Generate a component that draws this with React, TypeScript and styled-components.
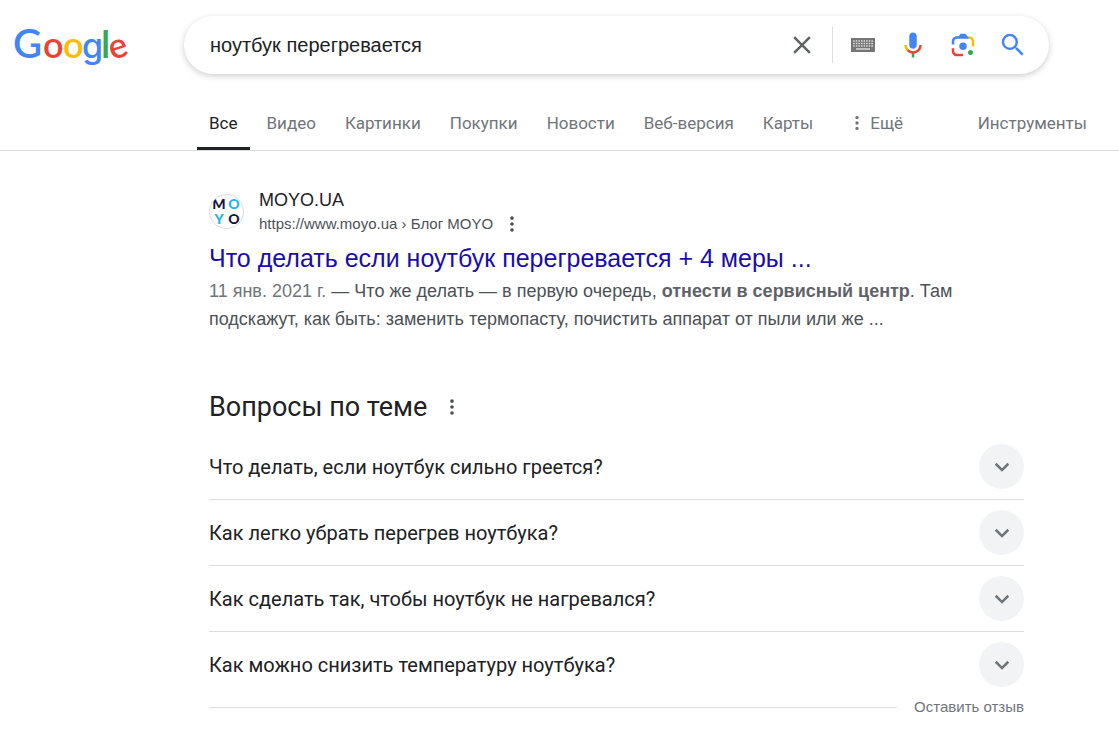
import React from 'react';
import styled, { createGlobalStyle } from 'styled-components';

const GlobalStyle = createGlobalStyle`
  *, *::before, *::after { box-sizing: border-box; }
  body {
    margin: 0;
    background: #fff;
    color: #202124;
    font-family: "Liberation Sans", Arial, sans-serif;
  }
  h2, h3, p, ul { margin: 0; padding: 0; font-weight: 400; }
  ul { list-style: none; }
  a { text-decoration: none; color: inherit; }
  button {
    border: 0;
    padding: 0;
    background: none;
    font: inherit;
    color: inherit;
    cursor: pointer;
  }
  svg { display: block; }
`;

const display = 'Roboto, "Liberation Sans", sans-serif';

const Header = styled.header`
  display: flex;
  align-items: center;
  padding: 16px 70px 0 12px;
`;

const LogoLink = styled.a`
  flex: 0 0 172px;
`;

const SearchForm = styled.form`
  flex: 1;
  display: flex;
  align-items: center;
  height: 58px;
  padding: 0 20px 0 26px;
  border-radius: 29px;
  background: #fff;
  box-shadow: 0 2px 6px rgba(32, 33, 36, 0.22);
`;

const SearchInput = styled.input`
  flex: 1;
  min-width: 0;
  border: 0;
  padding: 0;
  outline: 0;
  background: transparent;
  font: 20px/30px "Liberation Sans", Arial, sans-serif;
  color: #202124;
`;

const Divider = styled.span`
  width: 1px;
  height: 36px;
  margin: 0 14px;
  background: #dadce0;
`;

const IconButton = styled.button`
  display: grid;
  place-items: center;
  width: 32px;
  height: 32px;
`;

const SearchTools = styled.div`
  display: flex;
  gap: 18px;
`;

const TabBar = styled.nav`
  display: flex;
  height: 77px;
  padding: 22px 32px 0 197px;
  border-bottom: 1px solid #dadce0;
  font: 17px/24px ${display};
  color: #70757a;
`;

const Tabs = styled.ul`
  flex: 1;
  display: flex;
  gap: 5px;
`;

const Tab = styled.a<{ $active?: boolean }>`
  display: block;
  height: 54px;
  padding: 15px 12px 0;
  white-space: nowrap;
  color: ${p => (p.$active ? '#202124' : 'inherit')};
  border-bottom: 3px solid ${p => (p.$active ? '#202124' : 'transparent')};
`;

const TextButton = styled.button`
  display: flex;
  align-items: center;
  gap: 3px;
  height: 54px;
  padding: 0 12px 0 17px;
  white-space: nowrap;
`;

const ToolsButton = styled(TextButton)`
  padding: 0;
`;

const Main = styled.main`
  max-width: 1024px;
  padding: 36px 0 20px 209px;
`;

const Source = styled.div`
  display: flex;
  align-items: center;
  gap: 15px;
`;

const Favicon = styled.svg`
  flex: none;
  border: 1px solid #dadce0;
  border-radius: 50%;
`;

const SiteName = styled.div`
  font-size: 18px;
  line-height: 26px;
`;

const SiteUrl = styled.div`
  display: flex;
  align-items: center;
  gap: 8px;
  font-size: 15px;
  line-height: 22px;
  color: #4d5156;
`;

const MoreButton = styled.button`
  display: grid;
  place-items: center;
  width: 22px;
  height: 22px;
  color: #4d5156;
`;

const ResultTitle = styled.h3`
  padding: 6px 0 2px;
  font-size: 25px;
  line-height: 34px;
  color: #1a0dab;
`;

const Snippet = styled.p`
  font-size: 18px;
  line-height: 28px;
  color: #4d5156;

  time { color: #70757a; }
  b { color: #5f6368; }
`;

const Related = styled.section`
  padding-top: 56px;
`;

const RelatedHead = styled.div`
  display: flex;
  align-items: center;
  gap: 14px;
  height: 36px;
`;

const RelatedTitle = styled.h2`
  font: 27px/36px ${display};
`;

const Questions = styled.ul`
  padding-top: 9px;
`;

const Question = styled.li`
  border-bottom: 1px solid #dadce0;

  &:last-child { border-bottom: 0; }
`;

const QuestionButton = styled.button`
  display: flex;
  align-items: center;
  justify-content: space-between;
  width: 100%;
  height: 65px;
  text-align: left;
  font: 20px/28px ${display};
`;

const Chevron = styled.span`
  display: grid;
  place-items: center;
  width: 45px;
  height: 45px;
  border-radius: 50%;
  background: #f1f3f4;
  color: #70757a;
`;

const Feedback = styled.footer`
  display: flex;
  align-items: center;
  gap: 17px;
  font-size: 15px;
  line-height: 20px;
  color: #70757a;

  &::before {
    content: "";
    flex: 1;
    height: 1px;
    background: #dadce0;
  }
`;

const Logo = () => (
  <svg width="120" height="56" viewBox="0 0 120 56" role="img" aria-label="Google" fontFamily="Lato, sans-serif" fontWeight="600" fontSize="36">
    <text x="1" y="41" fontSize="40" fill="#4285f4">G</text>
    <text x="31" y="41" fill="#ea4335">o</text>
    <text x="51" y="41" fill="#fbbc05">o</text>
    <text x="70" y="41" fontFamily="Inter, sans-serif" fontSize="34" fontWeight="500" fill="#4285f4">g</text>
    <text x="89" y="41" fontSize="38" fill="#34a853">l</text>
    <text x="97" y="41" transform="rotate(-18 106 32)" fontSize="35" fill="#ea4335">e</text>
  </svg>
);

const Dots = ({ size = 22, r = 2 }: { size?: number; r?: number }) => (
  <svg width={size} height={size} viewBox="0 0 24 24" fill="currentColor" aria-hidden="true">
    <circle cx="12" cy="5.5" r={r} />
    <circle cx="12" cy="12" r={r} />
    <circle cx="12" cy="18.5" r={r} />
  </svg>
);

const ClearIcon = () => (
  <svg width="30" height="30" viewBox="0 0 24 24" fill="#5f6368" aria-hidden="true">
    <path d="M19 6.41L17.59 5 12 10.59 6.41 5 5 6.41 10.59 12 5 17.59 6.41 19 12 13.41 17.59 19 19 17.59 13.41 12z" />
  </svg>
);

const KeyboardIcon = () => (
  <svg width="24" height="14" viewBox="0 0 24 14" aria-hidden="true">
    <rect width="24" height="14" fill="#757575" />
    {[3, 5.5, 8].map(y => (
      <path key={y} d={`M2.2 ${y}H22`} stroke="#dcdcdc" strokeWidth="1.5" strokeDasharray="1.5 1.1" />
    ))}
    <path d="M5 11H19" stroke="#f1f1f1" strokeWidth="1.2" />
  </svg>
);

const MicIcon = () => (
  <svg width="30" height="30" viewBox="0 0 24 24" aria-hidden="true">
    <path fill="#4285f4" d="M12 15c1.66 0 3-1.31 3-2.97V5.01C15 3.35 13.66 2 12 2S9 3.34 9 5.01v7.02C9 13.69 10.34 15 12 15z" />
    <path fill="#34a853" d="M11 18.08h2V22h-2z" />
    <path fill="#fbbc05" d="M7.05 16.87C5.78 15.54 5 14.04 5 12h2c0 1.45.56 2.42 1.47 3.38v.32l-1.15 1.18z" />
    <path fill="#ea4335" d="M12 16.93a4.97 5.25 0 0 1-3.54-1.55l-1.41 1.49C8.31 18.21 10.07 19 12 19c3.87 0 6.99-2.92 6.99-7H17c0 2.92-2.24 4.93-5 4.93z" />
  </svg>
);

const LensIcon = () => (
  <svg width="30" height="30" viewBox="0 0 192 192" aria-hidden="true">
    <circle fill="#34a853" cx="144" cy="144" r="16" />
    <circle fill="#4285f4" cx="96" cy="104" r="24" />
    <path fill="#ea4335" d="M24 135.2C24 153.31 38.69 168 56.8 168H96v-16l-40.1-.1C47.1 151.9 40 143.71 40 134v-18H24z" />
    <path fill="#fbbc04" d="M168 72.8C168 54.69 153.31 40 135.2 40H116l20 16c8.8 0 16 8.29 16 18v30h16z" />
    <path fill="#4285f4" d="M112 24H80L68 40H56.8C38.69 40 24 54.69 24 72.8V92h16V74c0-9.71 7.2-18 16-18h80z" />
  </svg>
);

const SearchIcon = () => (
  <svg width="30" height="30" viewBox="0 0 24 24" fill="#4285f4" aria-hidden="true">
    <path d="M15.5 14h-.79l-.28-.27A6.47 6.47 0 0 0 16 9.5 6.5 6.5 0 1 0 9.5 16c1.61 0 3.09-.59 4.23-1.57l.27.28v.79l5 4.99L20.49 19zm-6 0C7.01 14 5 11.99 5 9.5S7.01 5 9.5 5 14 7.01 14 9.5 11.99 14 9.5 14z" />
  </svg>
);

const ExpandIcon = () => (
  <svg width="28" height="28" viewBox="0 0 24 24" fill="none" stroke="currentColor" strokeWidth="2.2" aria-hidden="true">
    <path d="M6.6 9.2L12 14.6l5.4-5.4" />
  </svg>
);

const MoyoIcon = () => (
  <Favicon width="35" height="35" viewBox="0 0 33 33" aria-hidden="true" fontFamily="Lato, sans-serif" fontWeight="900" fontSize="14" textAnchor="middle">
    <text x="9" y="14" fill="#14163f">M</text>
    <text x="24" y="14" fill="#1eb4ea">O</text>
    <text x="9" y="29" fill="#1eb4ea">Y</text>
    <text x="24" y="29" fill="#14163f">O</text>
  </Favicon>
);

const tabs = ['Все', 'Видео', 'Картинки', 'Покупки', 'Новости', 'Веб-версия', 'Карты'];

const questions = [
  'Что делать, если ноутбук сильно греется?',
  'Как легко убрать перегрев ноутбука?',
  'Как сделать так, чтобы ноутбук не нагревался?',
  'Как можно снизить температуру ноутбука?',
];

export default function App() {
  return (
    <>
      <GlobalStyle />
      <Header>
        <LogoLink href="#home"><Logo /></LogoLink>
        <SearchForm role="search" onSubmit={e => e.preventDefault()}>
          <SearchInput type="text" aria-label="Найти" defaultValue="ноутбук перегревается" />
          <IconButton type="button" aria-label="Очистить"><ClearIcon /></IconButton>
          <Divider />
          <SearchTools>
            <IconButton type="button" aria-label="Клавиатура"><KeyboardIcon /></IconButton>
            <IconButton type="button" aria-label="Голосовой поиск"><MicIcon /></IconButton>
            <IconButton type="button" aria-label="Поиск по картинке"><LensIcon /></IconButton>
            <IconButton type="submit" aria-label="Поиск"><SearchIcon /></IconButton>
          </SearchTools>
        </SearchForm>
      </Header>

      <TabBar>
        <Tabs>
          {tabs.map((label, i) => (
            <li key={label}>
              <Tab href="#results" $active={i === 0} aria-current={i === 0 ? 'page' : undefined}>{label}</Tab>
            </li>
          ))}
          <li>
            <TextButton type="button"><Dots size={20} />Ещё</TextButton>
          </li>
        </Tabs>
        <ToolsButton type="button">Инструменты</ToolsButton>
      </TabBar>

      <Main>
        <article>
          <Source>
            <MoyoIcon />
            <div>
              <SiteName>MOYO.UA</SiteName>
              <SiteUrl>
                <span>https://www.moyo.ua › Блог MOYO</span>
                <MoreButton type="button" aria-label="О результате"><Dots /></MoreButton>
              </SiteUrl>
            </div>
          </Source>
          <ResultTitle><a href="#article">Что делать если ноутбук перегревается + 4 меры ...</a></ResultTitle>
          <Snippet>
            <time dateTime="2021-01-11">11 янв. 2021 г.</time> — Что же делать — в первую очередь, <b>отнести в сервисный центр</b>. Там подскажут, как быть: заменить термопасту, почистить аппарат от пыли или же ...
          </Snippet>
        </article>

        <Related>
          <RelatedHead>
            <RelatedTitle>Вопросы по теме</RelatedTitle>
            <MoreButton type="button" aria-label="О блоке"><Dots /></MoreButton>
          </RelatedHead>
          <Questions>
            {questions.map(q => (
              <Question key={q}>
                <QuestionButton type="button" aria-expanded="false">
                  {q}
                  <Chevron><ExpandIcon /></Chevron>
                </QuestionButton>
              </Question>
            ))}
          </Questions>
          <Feedback><a href="#feedback">Оставить отзыв</a></Feedback>
        </Related>
      </Main>
    </>
  );
}
